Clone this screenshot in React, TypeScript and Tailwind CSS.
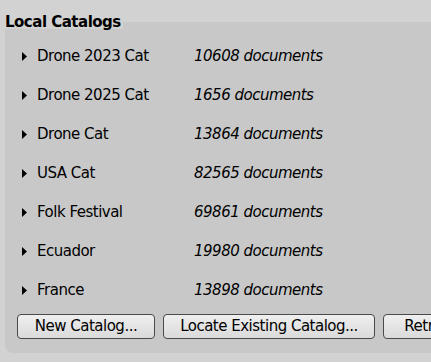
import React from "react";

const catalogs = [
  { name: "Drone 2023 Cat", docs: "10608 documents" },
  { name: "Drone 2025 Cat", docs: "1656 documents" },
  { name: "Drone Cat", docs: "13864 documents" },
  { name: "USA Cat", docs: "82565 documents" },
  { name: "Folk Festival", docs: "69861 documents" },
  { name: "Ecuador", docs: "19980 documents" },
  { name: "France", docs: "13898 documents" },
];

const Caret: React.FC = () => (
  <svg width="5" height="9" viewBox="0 0 5 9" className="shrink-0">
    <path d="M0 0 L5 4.5 L0 9 Z" fill="#000" />
  </svg>
);

const Button: React.FC<{ label: string; w: string }> = ({ label, w }) => (
  <button
    className={`${w} h-[25px] shrink-0 rounded-[4px] border border-[#4a4a4a] bg-gradient-to-b from-[#efefef] to-[#dadada] text-[15px] tracking-[-0.5px] text-black`}
  >
    {label}
  </button>
);

export default function App() {
  return (
    <div
      className="w-[431px] h-[362px] overflow-hidden bg-[#d2d2d2] text-black"
      style={{ fontFamily: '"DejaVu Sans", Verdana, sans-serif' }}
    >
      {/* Title sits over the panel's top edge, like a legend */}
      <div className="relative z-10 w-fit h-[29px] bg-[#d2d2d2] pl-[5px] pr-[2px] pt-[13px] text-[15px] font-bold leading-[18px] tracking-[-0.5px]">
        Local Catalogs
      </div>

      <div className="-mt-[7px] ml-[5px] w-[440px] rounded-b-[8px] bg-[#c8c8c8] pt-[15px] pb-[14px]">
        {catalogs.map((c) => (
          <div key={c.name} className="flex h-[39px] items-center pl-[17px] text-[15px] tracking-[-0.5px]">
            <Caret />
            <span className="ml-[10px] w-[157px] shrink-0">{c.name}</span>
            <span className="italic">{c.docs}</span>
          </div>
        ))}

        <div className="mt-[4px] flex gap-[8px] pl-[12px]">
          <Button label="New Catalog..." w="w-[138px]" />
          <Button label="Locate Existing Catalog..." w="w-[212px]" />
          <Button label="Retry" w="w-[80px]" />
        </div>
      </div>
    </div>
  );
}
